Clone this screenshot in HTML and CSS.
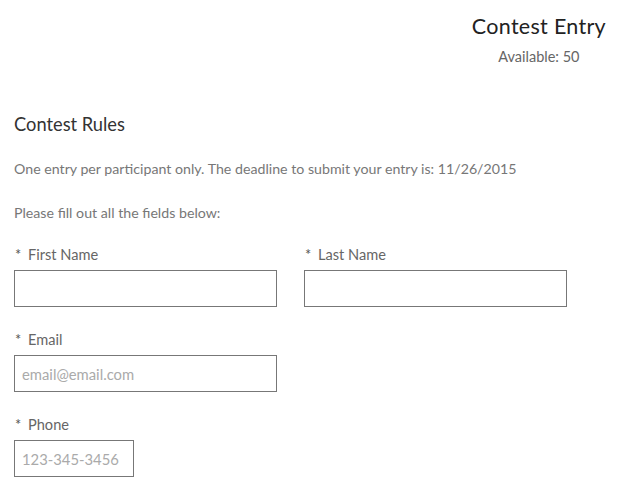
FILE: index.html
```html
<!DOCTYPE html>
<html>
<head>
<meta charset="utf-8">
<link rel="stylesheet" href="styles.css">
</head>
<body>
<div class="page">
  <header class="head">
    <div class="head-box">
      <h1 class="title">Contest Entry</h1>
      <div class="avail">Available: 50</div>
    </div>
  </header>
  <h2 class="rules">Contest Rules</h2>
  <p class="text text-first">One entry per participant only. The deadline to submit your entry is: 11/26/2015</p>
  <p class="text">Please fill out all the fields below:</p>
  <div class="row">
    <div class="field">
      <label class="label"><span class="star">*</span>First Name</label>
      <input class="input" type="text">
    </div>
    <div class="field">
      <label class="label"><span class="star">*</span>Last Name</label>
      <input class="input" type="text">
    </div>
  </div>
  <div class="row">
    <div class="field">
      <label class="label"><span class="star">*</span>Email</label>
      <input class="input" type="text" placeholder="email@email.com">
    </div>
  </div>
  <div class="row">
    <div class="field">
      <label class="label"><span class="star">*</span>Phone</label>
      <input class="input input-short" type="text" placeholder="123-345-3456">
    </div>
  </div>
</div>
</body>
</html>
```
FILE: styles.css
```css
html, body {
  margin: 0;
  padding: 0;
  background: #fff;
}
body {
  font-family: Lato, "Open Sans", "Liberation Sans", sans-serif;
  color: #777;
}
.page {
  padding: 0 19px 0 14px;
}
.head {
  display: flex;
  justify-content: flex-end;
  padding-top: 12px;
}
.head-box {
  text-align: center;
}
.title {
  margin: 0;
  font-size: 21.5px;
  font-weight: 400;
  color: #222;
  line-height: 28px;
  letter-spacing: 0.3px;
}
.avail {
  font-size: 14.5px;
  color: #666;
  line-height: 18px;
  margin-top: 8px;
}
.rules {
  margin: 46px 0 0;
  font-size: 18.3px;
  font-weight: 400;
  color: #333;
  line-height: 24px;
}
.text {
  margin: 26px 0 0;
  font-size: 14.2px;
  line-height: 18px;
  color: #777;
}
.text-first {
  margin-top: 24px;
}
.row {
  display: flex;
  margin-top: 24px;
}
.row + .row {
  margin-top: 24px;
}
.field {
  width: 290px;
  display: flex;
  flex-direction: column;
}
.label {
  font-size: 14.6px;
  line-height: 18px;
  color: #666;
  margin-bottom: 6px;
}
.star {
  display: inline-block;
  width: 13px;
  padding-left: 1px;
  color: #555;
}
.input {
  box-sizing: border-box;
  width: 263px;
  height: 37px;
  border: 1px solid #777;
  border-radius: 0;
  padding: 0 7px;
  font-family: Lato, "Open Sans", "Liberation Sans", sans-serif;
  font-size: 14.8px;
  color: #333;
  background: #fff;
  outline: none;
}
.input::placeholder {
  color: #aaa;
}
.input-short {
  width: 120px;
}
```
